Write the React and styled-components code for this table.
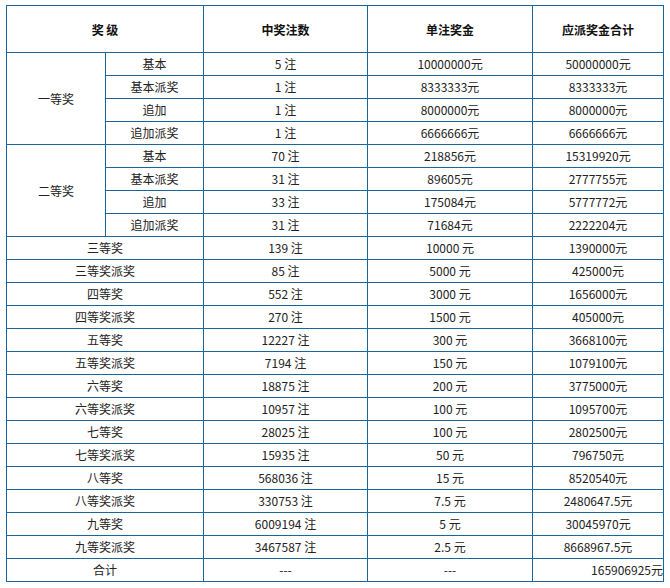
import React from "react";
import styled, { createGlobalStyle } from "styled-components";

const Global = createGlobalStyle`
  html, body { margin: 0; padding: 0; background: #fff; }
  body { font-family: "Noto Sans CJK SC", "Microsoft YaHei", sans-serif; }
`;

const Page = styled.div`
  padding: 5px 0 0 6px;
`;

const Table = styled.table`
  border-collapse: collapse;
  table-layout: fixed;
  width: 657px;
  font-size: 12px;
  color: #222;
`;

const HeadCell = styled.th`
  border: 1px solid #17679f;
  height: 46px;
  padding: 0;
  font-weight: bold;
  text-align: center;
  vertical-align: middle;
  color: #111;
`;

const Row = styled.tr`
  height: 23px;
`;

const Cell = styled.td`
  border: 1px solid #17679f;
  padding: 0;
  text-align: ${(p) => (p.$align === "right" ? "right" : "center")};
  vertical-align: middle;
  line-height: 22px;
  white-space: nowrap;
`;

const groups = [
  {
    name: "一等奖",
    rows: [
      ["基本", "5 注", "10000000元", "50000000元"],
      ["基本派奖", "1 注", "8333333元", "8333333元"],
      ["追加", "1 注", "8000000元", "8000000元"],
      ["追加派奖", "1 注", "6666666元", "6666666元"],
    ],
  },
  {
    name: "二等奖",
    rows: [
      ["基本", "70 注", "218856元", "15319920元"],
      ["基本派奖", "31 注", "89605元", "2777755元"],
      ["追加", "33 注", "175084元", "5777772元"],
      ["追加派奖", "31 注", "71684元", "2222204元"],
    ],
  },
];

const simple = [
  ["三等奖", "139 注", "10000 元", "1390000元"],
  ["三等奖派奖", "85 注", "5000 元", "425000元"],
  ["四等奖", "552 注", "3000 元", "1656000元"],
  ["四等奖派奖", "270 注", "1500 元", "405000元"],
  ["五等奖", "12227 注", "300 元", "3668100元"],
  ["五等奖派奖", "7194 注", "150 元", "1079100元"],
  ["六等奖", "18875 注", "200 元", "3775000元"],
  ["六等奖派奖", "10957 注", "100 元", "1095700元"],
  ["七等奖", "28025 注", "100 元", "2802500元"],
  ["七等奖派奖", "15935 注", "50 元", "796750元"],
  ["八等奖", "568036 注", "15 元", "8520540元"],
  ["八等奖派奖", "330753 注", "7.5 元", "2480647.5元"],
  ["九等奖", "6009194 注", "5 元", "30045970元"],
  ["九等奖派奖", "3467587 注", "2.5 元", "8668967.5元"],
];

export default function App() {
  return (
    <Page>
      <Global />
      <Table>
        <colgroup>
          <col style={{ width: 99 }} />
          <col style={{ width: 98 }} />
          <col style={{ width: 164 }} />
          <col style={{ width: 165 }} />
          <col style={{ width: 131 }} />
        </colgroup>
        <thead>
          <tr>
            <HeadCell colSpan={2}>奖 级</HeadCell>
            <HeadCell>中奖注数</HeadCell>
            <HeadCell>单注奖金</HeadCell>
            <HeadCell>应派奖金合计</HeadCell>
          </tr>
        </thead>
        <tbody>
          {groups.map((g) =>
            g.rows.map((r, i) => (
              <Row key={g.name + i}>
                {i === 0 && <Cell rowSpan={g.rows.length}>{g.name}</Cell>}
                {r.map((c, j) => (
                  <Cell key={j}>{c}</Cell>
                ))}
              </Row>
            ))
          )}
          {simple.map((r) => (
            <Row key={r[0]}>
              <Cell colSpan={2}>{r[0]}</Cell>
              <Cell>{r[1]}</Cell>
              <Cell>{r[2]}</Cell>
              <Cell>{r[3]}</Cell>
            </Row>
          ))}
          <Row>
            <Cell colSpan={2}>合计</Cell>
            <Cell>---</Cell>
            <Cell>---</Cell>
            <Cell $align="right">165906925元</Cell>
          </Row>
        </tbody>
      </Table>
    </Page>
  );
}
